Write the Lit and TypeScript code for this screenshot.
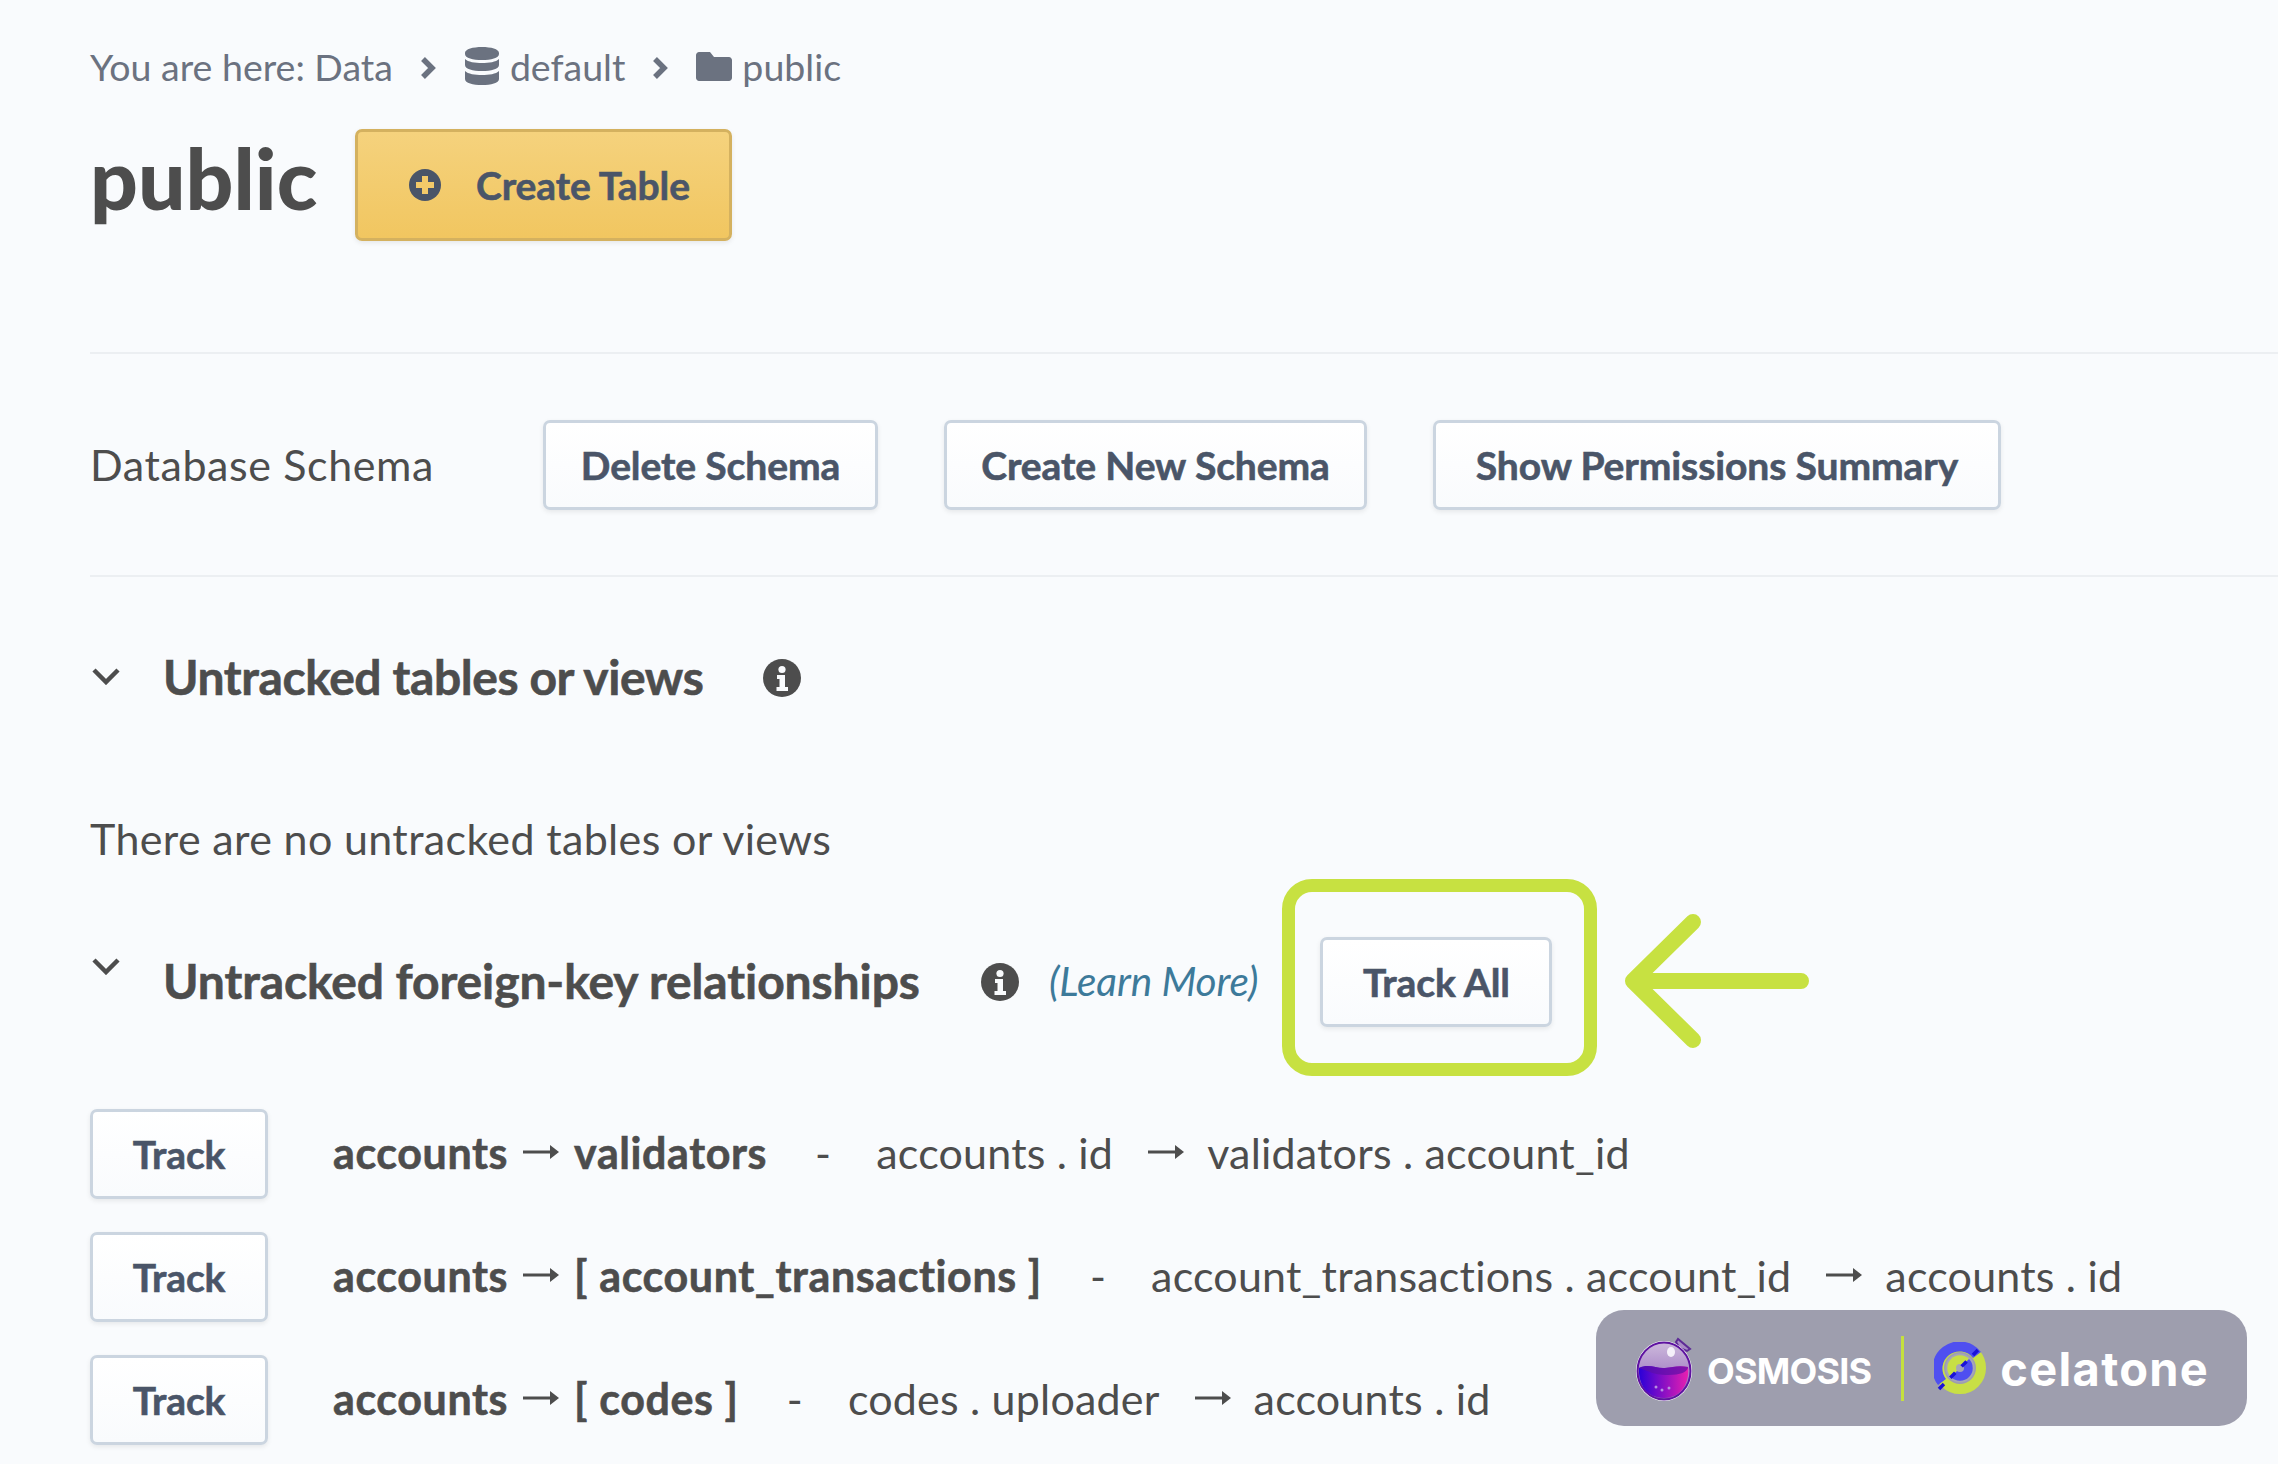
import { LitElement, html, css, svg } from 'lit';
import { customElement } from 'lit/decorators.js';

const rows = [
  { src: 'accounts', dst: 'validators', left: 'accounts . id', right: 'validators . account_id' },
  { src: 'accounts', dst: '[ account_transactions ]', left: 'account_transactions . account_id', right: 'accounts . id' },
  { src: 'accounts', dst: '[ codes ]', left: 'codes . uploader', right: 'accounts . id' },
];

const chevronRight = html`<svg class="crumb-sep" viewBox="0 0 18 24"><path d="M4 3l9 9-9 9" fill="none" stroke="#6b7280" stroke-width="5.500"/></svg>`;

const chevronDown = html`<svg class="chevron" viewBox="0 0 30 18"><path d="M3 3l12 12L27 3" fill="none" stroke="#4d4d4d" stroke-width="4.500"/></svg>`;

const infoIcon = html`<svg class="info" viewBox="0 0 38 38">
  <circle cx="19" cy="19" r="19" fill="#4d4d4d"/>
  <circle cx="19" cy="10.500" r="3.600" fill="#f9fbfd"/>
  <path d="M14 16h8v12h3v4H13.500v-4h3v-8H14z" fill="#f9fbfd"/>
</svg>`;

const arrowGlyph = svg`<path d="M1 11h30" stroke="#4d4d4d" stroke-width="3" fill="none"/><path d="M28 4l9 7-9 7z" fill="#4d4d4d"/>`;

@customElement('app-root')
export class AppRoot extends LitElement {
  static styles = css`
    :host {
      display: block;
      position: relative;
      width: 2278px;
      height: 1464px;
      overflow: hidden;
      background: #f9fbfd;
      color: #4d4d4d;
      font-family: 'Lato', 'Noto Sans', sans-serif;
      font-size: 39px;
    }

    .page {
      padding: 0 0 0 90px;
    }

    .breadcrumb {
      display: flex;
      align-items: center;
      height: 44px;
      margin-top: 44px;
      color: #6b7280;
      font-size: 37.500px;
      white-space: pre;
    }

    .crumb-sep {
      width: 18px;
      height: 24px;
      margin: 3px 27px 0 26px;
    }

    .crumb-icon {
      width: 36px;
      height: 40px;
      margin-right: 10px;
    }

    .title-row {
      display: flex;
      align-items: center;
      height: 112px;
      margin-top: 41px;
    }

    h1 {
      flex: 0 0 265px;
      margin: 0;
      padding-bottom: 14px;
      font-size: 84px;
      font-weight: 900;
      line-height: 1;
    }

    .btn {
      display: inline-flex;
      align-items: center;
      justify-content: center;
      box-sizing: border-box;
      height: 90px;
      border: 3px solid #cbd5e0;
      border-radius: 7px;
      background: linear-gradient(#ffffff, #f9fbfd);
      box-shadow: 0 2px 5px rgba(0, 0, 0, 0.08);
      color: #4a5568;
      font-size: 39px;
      font-weight: 700;
      letter-spacing: -0.1px;
      -webkit-text-stroke: 0.6px currentColor;
      white-space: nowrap;
    }

    .btn-primary {
      justify-content: flex-start;
      width: 377px;
      height: 112px;
      padding-left: 51px;
      border-color: #d4b15f;
      background: linear-gradient(#f5d27d, #f1c660);
      gap: 35px;
    }

    .plus {
      width: 32px;
      height: 32px;
    }

    .rule {
      height: 2px;
      background: #eceff2;
    }

    .schema-row {
      display: flex;
      align-items: center;
      height: 221px;
    }

    .schema-label {
      width: 453px;
      font-size: 43px;
      letter-spacing: 0.6px;
    }

    .schema-row .btn + .btn {
      margin-left: 66px;
    }

    .section-head {
      display: flex;
      align-items: center;
      font-size: 48px;
      font-weight: 700;
      letter-spacing: -0.1px;
      -webkit-text-stroke: 0.6px currentColor;
      white-space: nowrap;
    }

    .section-head.tight {
      letter-spacing: -0.4px;
    }

    .chevron {
      display: block;
      width: 30px;
      height: 18px;
      margin: 0 42px 0 1px;
    }

    .raised {
      margin-top: -28px;
    }

    .info {
      width: 38px;
      height: 38px;
      margin-top: 4px;
    }

    .empty-note {
      font-size: 43px;
      letter-spacing: 0.35px;
      line-height: 50px;
    }

    .learn {
      color: #3d7a9a;
      font-size: 40.500px;
      font-style: italic;
      font-weight: 400;
      -webkit-text-stroke: 0;
    }

    /* annotation sits over the page */
    .track-all {
      position: relative;
      margin: 4px 0 0 62px;
    }

    .highlight {
      position: absolute;
      left: -41px;
      top: -61px;
      width: 315px;
      height: 197px;
      box-sizing: border-box;
      border: 13px solid #c7e141;
      border-radius: 30px;
    }

    .pointer {
      position: absolute;
      left: 298px;
      top: -27px;
      width: 190px;
      height: 136px;
    }

    .rel-row {
      display: flex;
      align-items: center;
      height: 90px;
      margin-bottom: 33px;
      font-size: 43px;
      letter-spacing: 0.2px;
      white-space: pre;
    }

    .rel-row .btn {
      width: 178px;
      margin: 3px 65px 0 0;
    }

    .rel-name {
      display: flex;
      align-items: center;
      font-weight: 700;
      letter-spacing: 0.6px;
      -webkit-text-stroke: 0.6px currentColor;
    }

    .rel-arrow {
      flex: none;
      width: 38px;
      height: 22px;
      margin: 0 14px;
    }

    .rel-arrow.wide {
      margin: 0 22px 0 34px;
    }

    .dash {
      margin: 0 45px 0 48px;
    }

    .badge {
      position: absolute;
      left: 1596px;
      top: 1310px;
      display: flex;
      align-items: center;
      box-sizing: border-box;
      width: 651px;
      height: 116px;
      padding-left: 38px;
      border-radius: 28px;
      background: #9e9eae;
      color: #fff;
    }

    .osmosis {
      margin: 5px 0 0 11px;
      font-family: 'Inter', sans-serif;
      font-size: 36px;
      font-weight: 700;
      letter-spacing: -0.8px;
    }

    .badge-rule {
      width: 3px;
      height: 65px;
      margin: 0 30px 0 30px;
      background: #c5e03e;
    }

    .celatone {
      margin-left: 14px;
      font-family: 'Inter', sans-serif;
      font-size: 47px;
      font-weight: 700;
      letter-spacing: 1.300px;
    }
  `;

  render() {
    return html`
      <div class="page">
        <div class="breadcrumb">
          <span>You are here: Data</span>
          ${chevronRight}
          <svg class="crumb-icon" viewBox="0 0 36 40">
            <path fill="#6b7280" d="M18 1c9 0 17 2 17 6v1c0 4-8 6-17 6S1 12 1 8V7c0-4 8-6 17-6zM1 13c3 3 10 4 17 4s14-1 17-4v6c0 4-8 6-17 6S1 23 1 19zM1 25c3 3 10 4 17 4s14-1 17-4v8c0 4-8 6-17 6S1 37 1 33z"/>
          </svg>
          <span>default</span>
          ${chevronRight}
          <svg class="crumb-icon" viewBox="0 0 36 30">
            <path fill="#6b7280" d="M3 1h11l4 5h15c1.500 0 3 1.500 3 3v18c0 1.500-1.500 3-3 3H3c-1.500 0-3-1.500-3-3V4c0-1.500 1.500-3 3-3z"/>
          </svg>
          <span>public</span>
        </div>

        <div class="title-row">
          <h1>public</h1>
          <div class="btn btn-primary">
            <svg class="plus" viewBox="0 0 32 32">
              <circle cx="16" cy="16" r="16" fill="#4a5568"/>
              <path d="M13 7h6v6h6v6h-6v6h-6v-6H7v-6h6z" fill="#f3ca69"/>
            </svg>
            Create Table
          </div>
        </div>

        <div class="rule" style="margin-top:111px"></div>

        <div class="schema-row">
          <div class="schema-label">Database Schema</div>
          <div class="btn" style="width:335px">Delete Schema</div>
          <div class="btn" style="width:423px">Create New Schema</div>
          <div class="btn" style="width:568px">Show Permissions Summary</div>
        </div>

        <div class="rule"></div>

        <div class="section-head tight" style="margin-top:71px;height:56px">
          ${chevronDown}
          <span style="width:600px">Untracked tables or views</span>
          ${infoIcon}
        </div>

        <div class="empty-note" style="margin-top:110px">There are no untracked tables or views</div>

        <div class="section-head" style="margin-top:71px;height:90px">
          <span class="raised">${chevronDown}</span>
          <span style="width:818px">Untracked foreign-key relationships</span>
          ${infoIcon}
          <span class="learn" style="margin-left:30px">(Learn More)</span>
          <div class="btn track-all" style="width:232px">
            Track All
            <div class="highlight"></div>
            <svg class="pointer" viewBox="0 0 190 136">
              <path d="M180 68H12M72 9L12 68l60 59" fill="none" stroke="#c7e141" stroke-width="16" stroke-linecap="round" stroke-linejoin="round"/>
            </svg>
          </div>
        </div>

        <div style="height:82px"></div>

        ${rows.map(
          row => html`
            <div class="rel-row">
              <div class="btn">Track</div>
              <span class="rel-name">${row.src}<svg class="rel-arrow" viewBox="0 0 38 22">${arrowGlyph}</svg>${row.dst}</span>
              <span class="dash">-</span>
              <span>${row.left}</span>
              <svg class="rel-arrow wide" viewBox="0 0 38 22">${arrowGlyph}</svg>
              <span>${row.right}</span>
            </div>
          `
        )}
      </div>

      <div class="badge">
        <svg width="62" height="66" viewBox="0 0 62 66">
          <defs>
            <linearGradient id="glass" x1="0" y1="0" x2="0" y2="1">
              <stop offset="0" stop-color="#cdb9dc"/>
              <stop offset="1" stop-color="#8a5fb5"/>
            </linearGradient>
            <linearGradient id="liquid" x1="0" y1="0" x2="1" y2="0">
              <stop offset="0" stop-color="#2a00d8"/>
              <stop offset="1" stop-color="#e81fb0"/>
            </linearGradient>
          </defs>
          <path d="M45 12l-3-5 2-3 12 10-3 2-5-2z" fill="#a98cc4" stroke="#5e2a96" stroke-width="2"/>
          <ellipse cx="30" cy="36" rx="28" ry="30" fill="#fff"/>
          <ellipse cx="30" cy="36" rx="26.500" ry="28.500" fill="url(#glass)" stroke="#5e12a0" stroke-width="2"/>
          <path d="M5 33c10-5 18 1 26 0s14-3 23-1c2 14-6 31-24 31S4 48 5 33z" fill="url(#liquid)"/>
          <path d="M5 33c10-5 18 1 26 0s14-3 23-1c0 5-8 8-20 8-7 0-14-1-18-3z" fill="#5d10a8" opacity="0.7"/>
          <ellipse cx="37" cy="17" rx="4" ry="5" fill="#f5f0fa"/>
          <circle cx="22" cy="52" r="1.500" fill="#b78ee0"/>
          <circle cx="28" cy="55" r="1.500" fill="#b78ee0"/>
          <circle cx="35" cy="53" r="1.500" fill="#b78ee0"/>
        </svg>
        <span class="osmosis">OSMOSIS</span>
        <div class="badge-rule"></div>
        <svg width="52" height="52" viewBox="0 0 52 52">
          <circle cx="26" cy="26" r="21" fill="none" stroke="#c8df45" stroke-width="10"/>
          <path d="M8 40A21 21 0 0 1 43 13" fill="none" stroke="#4f4ff0" stroke-width="10"/>
          <circle cx="26" cy="26" r="12.500" fill="none" stroke="#a5a5b8" stroke-width="4"/>
          <path d="M17 35A12 12 0 0 1 35 17" fill="#c8df45"/>
          <path d="M35 17A12 12 0 0 1 17 35z" fill="#4f4ff0"/>
          <circle cx="26" cy="26" r="4" fill="#a5a5b8"/>
          <path d="M5 47L47 5" stroke="#1b12d8" stroke-width="3.500" stroke-dasharray="7 9"/>
        </svg>
        <span class="celatone">celatone</span>
      </div>
    `;
  }
}
